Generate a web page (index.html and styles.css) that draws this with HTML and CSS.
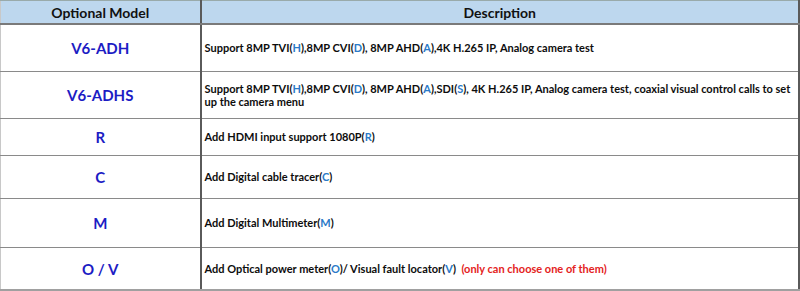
FILE: index.html
```html
<!DOCTYPE html>
<html>
<head>
<meta charset="utf-8">
<link rel="stylesheet" href="styles.css">
</head>
<body>
<table class="spec">
  <colgroup><col class="c-model"><col class="c-desc"></colgroup>
  <thead>
    <tr class="head"><th>Optional Model</th><th>Description</th></tr>
  </thead>
  <tbody>
    <tr class="r1"><td class="model">V6-ADH</td><td class="desc">Support 8MP TVI(<span class="k">H</span>),8MP CVI(<span class="k">D</span>), 8MP AHD(<span class="k">A</span>),4K H.265 IP, Analog camera test</td></tr>
    <tr class="r2"><td class="model">V6-ADHS</td><td class="desc">Support 8MP TVI(<span class="k">H</span>),8MP CVI(<span class="k">D</span>), 8MP AHD(<span class="k">A</span>),SDI(<span class="k">S</span>), 4K H.265 IP, Analog camera test, coaxial visual control calls to set up the camera menu</td></tr>
    <tr class="r3"><td class="model">R</td><td class="desc">Add HDMI input support 1080P(<span class="k">R</span>)</td></tr>
    <tr class="r4"><td class="model">C</td><td class="desc">Add Digital cable tracer(<span class="k">C</span>)</td></tr>
    <tr class="r5"><td class="model">M</td><td class="desc">Add Digital Multimeter(<span class="k">M</span>)</td></tr>
    <tr class="r6"><td class="model">O / V</td><td class="desc">Add Optical power meter(<span class="k">O</span>)/ Visual fault locator(<span class="k">V</span>)&nbsp;&nbsp;<span class="warn">(only can choose one of them)</span></td></tr>
  </tbody>
</table>
</body>
</html>
```
FILE: styles.css
```css
html, body { margin: 0; padding: 0; background: #fff; }
body { font-family: "Lato", "Open Sans", sans-serif; font-weight: 700; color: #111; }
.spec { border-collapse: collapse; width: 800px; table-layout: fixed; }
.c-model { width: 200px; }
.spec th, .spec td { padding: 0; border: 1px solid #8a8a8a; vertical-align: middle; }
.spec tr > :first-child { border-left: 1px solid #c8c8c8; }
.spec tr > :last-child { border-right: 2px solid #5a5a5a; }
.spec th + th, .spec td + td { border-left: 2px solid #5a5a5a; }
.head th { background: #bdd7ee; height: 22px; font-size: 14px; color: #111; border-top: 1px solid #9aa; border-bottom: 2px solid #7a7a7a; }
.model { text-align: center; color: #1c1cc4; font-size: 15px; }
.desc { font-size: 11px; line-height: 13.5px; padding: 0 3px 0 3px !important; color: #0d0d0d; }
.k { color: #2a7ac8; }
.warn { color: #e42222; }
.r1 td { height: 46px; }
.r2 td { height: 46px; }
.r3 td { height: 36px; }
.r4 td { height: 42px; }
.r5 td { height: 48px; }
.r6 td { height: 41px; border-bottom: 2px solid #a0a0a0; }
```
